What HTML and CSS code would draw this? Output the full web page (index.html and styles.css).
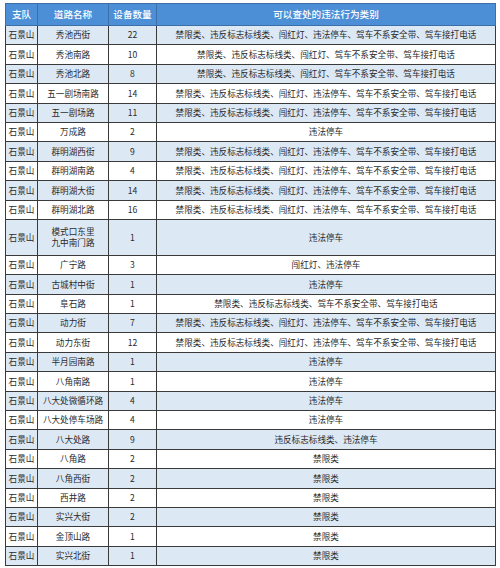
FILE: index.html
```html
<!DOCTYPE html>
<html lang="zh">
<head>
<meta charset="utf-8">
<link rel="stylesheet" href="styles.css">
</head>
<body>
<table class="grid">
<colgroup><col class="c1"><col class="c2"><col class="c3"><col class="c4"></colgroup>
<thead>
<tr class="head"><th>支队</th><th>道路名称</th><th>设备数量</th><th>可以查处的违法行为类别</th></tr>
</thead>
<tbody>
<tr class="odd"><td>石景山</td><td>秀池西街</td><td>22</td><td>禁限类、违反标志标线类、闯红灯、违法停车、驾车不系安全带、驾车接打电话</td></tr>
<tr><td>石景山</td><td>秀池南路</td><td>10</td><td>禁限类、违反标志标线类、闯红灯、驾车不系安全带、驾车接打电话</td></tr>
<tr class="odd"><td>石景山</td><td>秀池北路</td><td>8</td><td>禁限类、违反标志标线类、闯红灯、驾车不系安全带、驾车接打电话</td></tr>
<tr><td>石景山</td><td>五一剧场南路</td><td>14</td><td>禁限类、违反标志标线类、闯红灯、违法停车、驾车不系安全带、驾车接打电话</td></tr>
<tr class="odd"><td>石景山</td><td>五一剧场路</td><td>11</td><td>禁限类、违反标志标线类、闯红灯、违法停车、驾车不系安全带、驾车接打电话</td></tr>
<tr><td>石景山</td><td>万成路</td><td>2</td><td>违法停车</td></tr>
<tr class="odd"><td>石景山</td><td>群明湖西街</td><td>9</td><td>禁限类、违反标志标线类、闯红灯、违法停车、驾车不系安全带、驾车接打电话</td></tr>
<tr><td>石景山</td><td>群明湖南路</td><td>4</td><td>禁限类、违反标志标线类、闯红灯、违法停车、驾车不系安全带、驾车接打电话</td></tr>
<tr class="odd"><td>石景山</td><td>群明湖大街</td><td>14</td><td>禁限类、违反标志标线类、闯红灯、违法停车、驾车不系安全带、驾车接打电话</td></tr>
<tr><td>石景山</td><td>群明湖北路</td><td>16</td><td>禁限类、违反标志标线类、闯红灯、违法停车、驾车不系安全带、驾车接打电话</td></tr>
<tr class="odd tall"><td>石景山</td><td>模式口东里<br>九中南门路</td><td>1</td><td>违法停车</td></tr>
<tr><td>石景山</td><td>广宁路</td><td>3</td><td>闯红灯、违法停车</td></tr>
<tr class="odd"><td>石景山</td><td>古城村中街</td><td>1</td><td>违法停车</td></tr>
<tr><td>石景山</td><td>阜石路</td><td>1</td><td>禁限类、违反标志标线类、驾车不系安全带、驾车接打电话</td></tr>
<tr class="odd"><td>石景山</td><td>动力街</td><td>7</td><td>禁限类、违反标志标线类、闯红灯、违法停车、驾车不系安全带、驾车接打电话</td></tr>
<tr><td>石景山</td><td>动力东街</td><td>12</td><td>禁限类、违反标志标线类、闯红灯、违法停车、驾车不系安全带、驾车接打电话</td></tr>
<tr class="odd"><td>石景山</td><td>半月园南路</td><td>1</td><td>违法停车</td></tr>
<tr><td>石景山</td><td>八角南路</td><td>1</td><td>违法停车</td></tr>
<tr class="odd"><td>石景山</td><td>八大处微循环路</td><td>4</td><td>违法停车</td></tr>
<tr><td>石景山</td><td>八大处停车场路</td><td>4</td><td>违法停车</td></tr>
<tr class="odd"><td>石景山</td><td>八大处路</td><td>9</td><td>违反标志标线类、违法停车</td></tr>
<tr><td>石景山</td><td>八角路</td><td>2</td><td>禁限类</td></tr>
<tr class="odd"><td>石景山</td><td>八角西街</td><td>2</td><td>禁限类</td></tr>
<tr><td>石景山</td><td>西井路</td><td>2</td><td>禁限类</td></tr>
<tr class="odd"><td>石景山</td><td>实兴大街</td><td>2</td><td>禁限类</td></tr>
<tr><td>石景山</td><td>金顶山路</td><td>1</td><td>禁限类</td></tr>
<tr class="odd"><td>石景山</td><td>实兴北街</td><td>1</td><td>禁限类</td></tr>
</tbody>
</table>
</body>
</html>
```
FILE: styles.css
```css
html, body {
  margin: 0;
  padding: 0;
  background: #ffffff;
}
body {
  padding: 3px 0 0 5px;
  font-family: "Noto Sans CJK SC", "Noto Sans", sans-serif;
}
.grid {
  width: 490px;
  border-collapse: collapse;
  table-layout: fixed;
  color: #2b2b2b;
  font-size: 8.6px;
}
.c1 { width: 32px; }
.c2 { width: 71px; }
.c3 { width: 48px; }
.c4 { width: 339px; }
.grid th, .grid td {
  border: 1px solid #3a3a3a;
  padding: 0;
  text-align: center;
  vertical-align: middle;
  line-height: 1.35;
  white-space: nowrap;
  overflow: hidden;
}
.head th {
  height: 21px;
  background: #4d8fd7;
  color: #ffffff;
  font-weight: 500;
  font-size: 9.6px;
  border-color: #3c6fa8;
}
.grid td {
  height: 18.4px;
}
.odd td {
  background: #dde8f5;
}
.tall td {
  height: 35px;
}
```
